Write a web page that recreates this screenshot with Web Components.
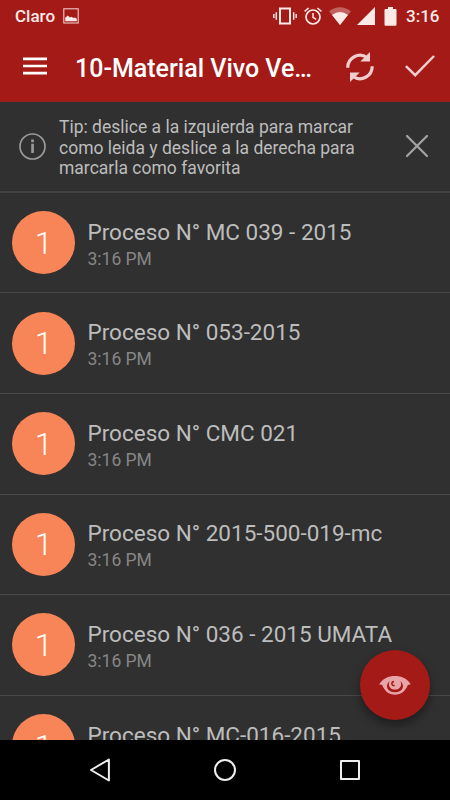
<!DOCTYPE html>
<html lang="es">
<head>
<meta charset="utf-8">
<meta name="viewport" content="width=device-width, initial-scale=1">
<title>10-Material Vivo Vegetal</title>
<style>
    html, body {
        margin: 0;
        height: 100%;
        overflow: hidden;
        background: #000;
    }
</style>
</head>
<body>
<feed-app></feed-app>

<script>
/**
 * Attaches an open shadow root and fills it
 * @param {HTMLElement} host
 * @param {string} html
 * @returns {ShadowRoot}
 */
function render(host, html) {
    const root = host.attachShadow({ mode: 'open' });
    root.innerHTML = html;
    return root;
}

/**
 * Android status bar: carrier on the left, indicators on the right
 * @extends {HTMLElement}
 */
class StatusBar extends HTMLElement {
    connectedCallback() {
        render(this, `
            <style>
                :host {
                    display: flex;
                    align-items: center;
                    height: 31px;
                    padding: 1px 10.5px 0 15px;
                    box-sizing: border-box;
                    color: #fbe9e7;
                    font-size: 17px;
                    font-weight: 500;
                    line-height: 20px;
                }
                svg { display: block; fill: currentColor; }
                .picture { margin-left: 8px; }
                .spacer { flex: 1; }
                .alarm { margin-left: 7.5px; }
                .wifi { margin-left: 6.5px; }
                .signal { margin-left: 6px; }
                .battery { margin-left: 9.5px; }
                .clock { margin-left: 9px; }
            </style>
            <slot></slot>
            <svg class="picture" width="16" height="16" viewBox="0 0 16 16">
                <rect x=".8" y=".8" width="14.4" height="14.2" fill="none" stroke="currentColor" stroke-width="1.1" opacity=".85"/>
                <path d="M2.2 13.200V9.800L4.800 7.500l2.200 2 1.500-.8 2 1.300 1.500-.5 1.800 1.200v2.500z"/>
            </svg>
            <span class="spacer"></span>
            <svg width="24" height="18" viewBox="0 0 24 18">
                <path fill="none" stroke="currentColor" stroke-width="1.500" d="M.8 7v4M3.300 5.200v7.600M20.700 5.200v7.600M23.200 7v4"/>
                <path fill="none" stroke="currentColor" stroke-width="2" d="M7 1.500h10v15H7z"/>
            </svg>
            <svg class="alarm" width="18" height="18" viewBox="0 0 18 18">
                <circle cx="9" cy="10" r="7" fill="none" stroke="currentColor" stroke-width="1.700"/>
                <path fill="none" stroke="currentColor" stroke-width="1.500" d="M9 6v4.300l3.200 2M.6 4.400 4.600 1M17.400 4.400 13.400 1"/>
            </svg>
            <svg class="wifi" width="22" height="18" viewBox="0 0 22 18">
                <path opacity=".35" d="M0 4.200Q11-3.600 22 4.200L11 18z"/>
                <path d="M3 8q8-5.800 16 0L11 18z"/>
            </svg>
            <svg class="signal" width="18" height="18" viewBox="0 0 18 18"><path d="M18 0v18H0z"/></svg>
            <svg class="battery" width="13" height="19" viewBox="0 0 13 19">
                <path d="M4 0h5v2h2.500q1 0 1 1v14.700q0 1-1 1h-10q-1 0-1-1V3q0-1 1-1H4z"/>
            </svg>
            <span class="clock">${this.getAttribute('time')}</span>
        `);
    }
}
customElements.define('status-bar', StatusBar);

/**
 * Toolbar with the menu, the feed title and two actions
 * @extends {HTMLElement}
 */
class AppToolbar extends HTMLElement {
    connectedCallback() {
        render(this, `
            <style>
                :host {
                    display: flex;
                    align-items: center;
                    height: 70px;
                    padding: 0 15px 0 23px;
                    box-sizing: border-box;
                    color: #fff;
                }
                svg { display: block; flex: none; }
                h1 {
                    width: 242px;
                    margin: 5px 0 0 28px;
                    font-size: 25px;
                    font-weight: 500;
                    line-height: 30px;
                    white-space: nowrap;
                }
                .sync { margin: 1px 0 0 29px; }
                .done { margin-left: 31px; }
            </style>
            <svg width="24" height="18" viewBox="0 0 24 18">
                <path fill="none" stroke="#fff" stroke-width="2.700" d="M0 1.900h24M0 9h24M0 16.200h24"/>
            </svg>
            <h1><slot></slot></h1>
            <svg class="sync" width="28" height="30" viewBox="0 0 28 30">
                <g id="half">
                    <path fill="none" stroke="#f0cdcf" stroke-width="3.200" d="M1.800 15.700A12.200 12.200 0 0 1 21 5.500"/>
                    <path fill="#f0cdcf" d="M24 0v9.400h-9.700z"/>
                </g>
                <use href="#half" transform="rotate(180 14 15)"/>
            </svg>
            <svg class="done" width="30" height="24" viewBox="0 0 30 24">
                <path fill="none" stroke="#f0cdcf" stroke-width="2.500" d="M.9 12.200 10.200 21.200 29 2"/>
            </svg>
        `);
    }
}
customElements.define('app-toolbar', AppToolbar);

class TipBanner extends HTMLElement {
    connectedCallback() {
        render(this, `
            <style>
                :host {
                    display: flex;
                    align-items: center;
                    flex: none;
                    height: 90.750px;
                    padding: 0 21px 0 19px;
                    box-sizing: border-box;
                    border-bottom: 2px solid #424242;
                    color: #bdbdbd;
                    font-size: 17.500px;
                    line-height: 20.500px;
                }
                svg { display: block; flex: none; }
                p {
                    flex: 1;
                    margin: 3px 0 0 13px;
                    white-space: pre-line;
                }
            </style>
            <svg width="27" height="27" viewBox="0 0 27 27">
                <circle cx="13.500" cy="13.500" r="12.500" fill="none" stroke="#9a9a9a" stroke-width="1.700"/>
                <path fill="#9a9a9a" d="M12.200 6.500h2.700v2.700h-2.700zM12.200 10.800h2.700v9.200h-2.700z"/>
            </svg>
            <p><slot></slot></p>
            <svg width="24" height="24" viewBox="0 0 24 24">
                <path stroke="#a2a2a2" stroke-width="2.300" stroke-linecap="round" d="m2 2 20 20M22 2 2 22"/>
            </svg>
        `);
    }
}
customElements.define('tip-banner', TipBanner);

/**
 * One list entry: round counter, title and time
 * @extends {HTMLElement}
 */
class FeedItem extends HTMLElement {
    connectedCallback() {
        render(this, `
            <style>
                :host {
                    display: flex;
                    align-items: center;
                    flex: none;
                    height: 100.600px;
                    padding-left: 12px;
                    box-sizing: border-box;
                    border-bottom: 1px solid #484848;
                }
                .count {
                    display: flex;
                    align-items: center;
                    justify-content: center;
                    width: 63px;
                    height: 63px;
                    box-sizing: border-box;
                    border-radius: 50%;
                    background: #f88558;
                    color: #fff;
                    font-size: 32px;
                    font-weight: 300;
                }
                .text { margin: 3px 0 0 12.500px; }
                .title {
                    color: #bdbdbd;
                    font-size: 22.500px;
                    line-height: 27px;
                    white-space: nowrap;
                }
                .time {
                    min-height: 21px;
                    color: #868686;
                    font-size: 17.500px;
                    line-height: 21px;
                    margin-top: 3px;
                }
            </style>
            <div class="count">${this.getAttribute('count')}</div>
            <div class="text">
                <div class="title"><slot></slot></div>
                <div class="time">${this.getAttribute('time') || ''}</div>
            </div>
        `);
    }
}
customElements.define('feed-item', FeedItem);

/**
 * Floating action button with the eye icon
 * @extends {HTMLElement}
 */
class ViewButton extends HTMLElement {
    connectedCallback() {
        render(this, `
            <style>
                :host {
                    display: flex;
                    align-items: center;
                    justify-content: center;
                    width: 70px;
                    height: 70px;
                    border-radius: 50%;
                    background: #a41a17;
                    box-shadow: 0 5px 10px rgba(0, 0, 0, .4);
                }
            </style>
            <svg width="32" height="22" viewBox="0 0 32 22">
                <path fill="#e8a5a8" d="M.2 10.200C4 4.500 9.500 2 16 2s12 2.500 15.800 8.200l-3 .8C26.500 17 22 20.800 16 20.800S5.500 17 3.200 11z"/>
                <path fill="#a41a17" d="M10.500 7C6 11 7.500 18.300 16 18.300S26 11 21.500 7c1.800 4.500-.5 8.600-5.500 8.600S8.700 11.500 10.500 7z"/>
                <path fill="none" stroke="#a41a17" stroke-width="1.500" d="M15 7.400c-2.700.2-3.300 4.400.7 4.200"/>
            </svg>
        `);
    }
}
customElements.define('view-button', ViewButton);

/**
 * System navigation bar
 * @extends {HTMLElement}
 */
class NavBar extends HTMLElement {
    connectedCallback() {
        render(this, `
            <style>
                :host {
                    display: flex;
                    align-items: center;
                    justify-content: space-between;
                    flex: none;
                    height: 60px;
                    padding: 0 88px;
                    box-sizing: border-box;
                    background: #000;
                }
                svg { display: block; fill: none; stroke: #eee; stroke-width: 2; }
            </style>
            <svg width="24" height="24" viewBox="0 0 24 24"><path stroke-linejoin="round" d="M20.900 1.500v21L3 12z"/></svg>
            <svg width="24" height="24" viewBox="0 0 24 24"><circle cx="12" cy="12" r="10"/></svg>
            <svg width="24" height="24" viewBox="0 0 24 24"><path stroke-linejoin="round" d="M3 3h18v18H3z"/></svg>
        `);
    }
}
customElements.define('nav-bar', NavBar);

/**
 * Whole screen
 * @extends {HTMLElement}
 */
class FeedApp extends HTMLElement {
    connectedCallback() {
        render(this, `
            <style>
                :host {
                    display: flex;
                    flex-direction: column;
                    height: 100vh;
                    position: relative;
                    font-family: Roboto, sans-serif;
                }
                header { flex: none; height: 102px; background: #a41a17; border-bottom: 1px solid #8f1f20; box-sizing: border-box; }
                main {
                    display: flex;
                    flex: 1;
                    flex-direction: column;
                    min-height: 0;
                    overflow: hidden;
                    background: #303030;
                }
                view-button { position: absolute; right: 20px; bottom: 80px; }
            </style>
            <header>
                <status-bar time="3:16">Claro</status-bar>
                <app-toolbar>10-Material Vivo Ve…</app-toolbar>
            </header>
            <main>
                <tip-banner>Tip: deslice a la izquierda para marcar
como leida y deslice a la derecha para
marcarla como favorita</tip-banner>
                <feed-item count="1" time="3:16 PM">Proceso N° MC 039 - 2015</feed-item>
                <feed-item count="1" time="3:16 PM">Proceso N° 053-2015</feed-item>
                <feed-item count="1" time="3:16 PM">Proceso N° CMC 021</feed-item>
                <feed-item count="1" time="3:16 PM">Proceso N° 2015-500-019-mc</feed-item>
                <feed-item count="1" time="3:16 PM">Proceso N° 036 - 2015 UMATA</feed-item>
                <feed-item count="1">Proceso N° MC-016-2015</feed-item>
            </main>
            <nav-bar></nav-bar>
            <view-button></view-button>
        `);
    }
}
customElements.define('feed-app', FeedApp);
</script>
</body>
</html>
